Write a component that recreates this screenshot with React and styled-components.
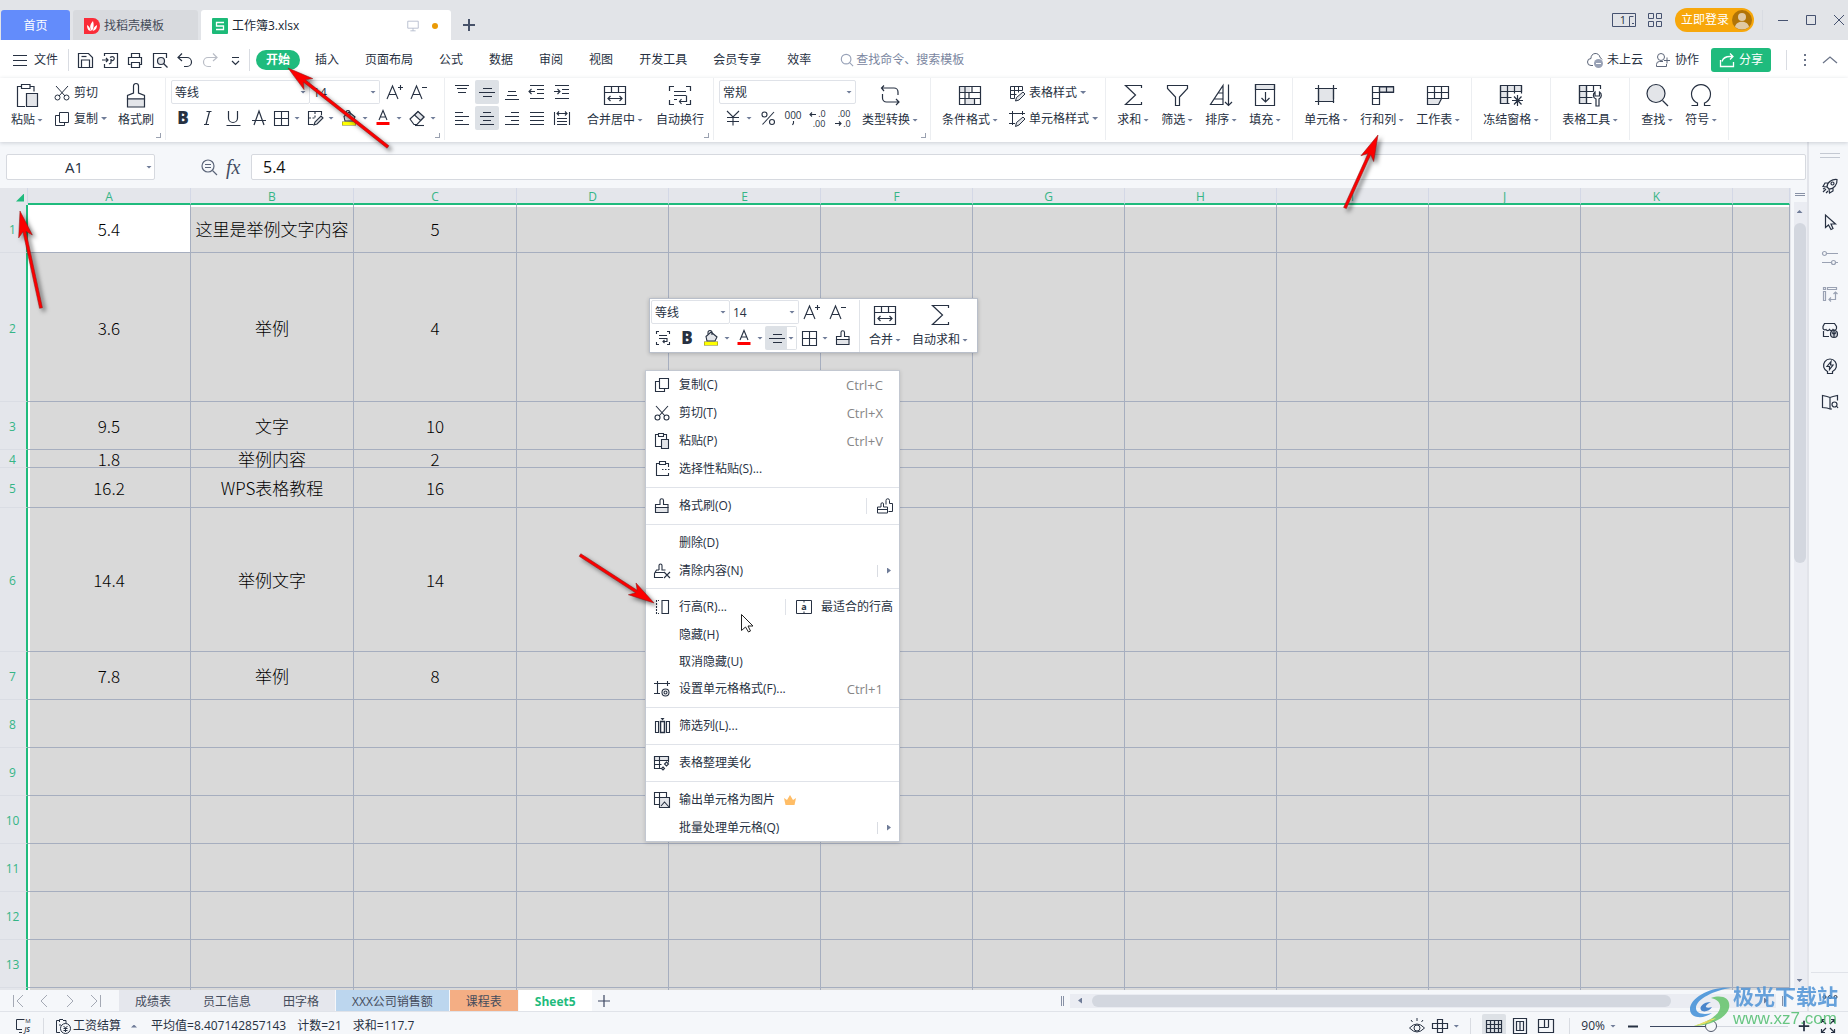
import React from "react";
import styled, { createGlobalStyle, css } from "styled-components";

const ink = "#273142";
const soft = "#e3e5e9";
const green = "#1fbb7d";
const line = "#a6aebf";
const ui = `"Open Sans", "Noto Sans CJK SC", sans-serif`;

const Global = createGlobalStyle`
  * { box-sizing: border-box; }
  body { margin: 0; font: 12px/16px ${ui}; color: ${ink}; background: #f5f7fa; }
  button, input, select { font: inherit; color: inherit; border: 0; padding: 0; margin: 0; background: none; outline: 0; }
  button { display: flex; align-items: center; white-space: nowrap; }
  svg { display: block; flex: none; overflow: visible; }
`;

/* ---------- icons ---------- */

const T = ({ x, y, s = 16, w = 300, children, ...p }) => (
  <text x={x} y={y} fontSize={s} fontWeight={w} fill={ink} stroke="none" textAnchor="middle" {...p}>{children}</text>
);

const brushShape = (
  <>
    <path d="M6 6.5V2.5a1.5 1.5 0 0 1 3.5 0v4h4.5v3H1.5v-3z" />
    <path d="M1.5 9.5H14v5H1.5z" fill={soft} />
  </>
);

const icons = {
  menu: <path d="M1 3.5h14M1 8.5h14M1 13.5h14" />,
  save: <><path d="M1.5 1.5h10l4 4v10h-14zM4.5 15v-7h8v7" /><path d="M4.5 4.5h5" /></>,
  exportPdf: <><path d="M2.5 4V1.5h13v14h-13V12M0 8h6M4 6l2 2-2 2" /><path d="M8 5.500c3-2 5 0 4 2s-3 1-3 0M9 7v4l-2 1" /></>,
  print: <><path d="M4.500 5V1.500h8V5M3.500 12.500h-2v-7h13v7h-2" /><path d="M4.500 10.500h8v5h-8z" /></>,
  preview: <><path d="M14.500 6V1.500h-13v14h8" /><circle cx="9" cy="9" r="3.500" fill={soft} /><path d="M11.500 11.500l4 4" /></>,
  undo: <path d="M5 1.500l-4 4 4 3.500M1.500 5.500H10a4.500 4.500 0 0 1 0 9H7" />,
  redo: <path d="M11 1.500l4 4-4 3.500M14.500 5.500H6a4.500 4.500 0 0 0 0 9h3" />,
  more: <path d="M5 5.500h7M5 9l3.500 3.500L12 9" />,
  search: <><circle cx="7" cy="7" r="5.500" /><path d="M11 11l4 4" /></>,
  cloud: <><path d="M6 13.500H4a3.500 3.500 0 0 1 0-7 4.500 4.500 0 0 1 9-1c1 .5 1.500 1 2 2" /><circle cx="11.500" cy="11.500" r="4.500" fill="#98a1b5" stroke="none" /><path d="M9 11.500h5" stroke="#fff" /></>,
  userPlus: <><circle cx="6" cy="5" r="3.500" /><path d="M1.500 14.500v-2a3 3 0 0 1 3-3H8M1.500 14.500h10V12M9 8.500h6M12 5.500v6" /></>,
  share: <path d="M1.500 8v6.500h13V10M3 9.500C4 6 7 4.500 11 4.500h3M11 1.500l3 3-3 3" />,
  dots: <path d="M8 2v2M8 7v2M8 12v2" strokeWidth="2" />,
  up: <path d="M1 11l7-6 7 6" />,
  cut: <><path d="M2 1l9 10M14 1L5 11" /><circle cx="3.500" cy="12.500" r="2.500" /><circle cx="12.500" cy="12.500" r="2.500" /></>,
  copy: <path d="M5.500 1.500h9v10h-9zM5.500 4.500h-4v10h9v-3" />,
  pasteS: <><path d="M4 1.500H1.500v12H7M10 1.500h2.500V6M4.500 .5h5v3h-5z" /><path d="M7.500 6.500h7v9h-7z" fill={soft} /></>,
  pasteSp: <><path d="M5 2.500H2.500v12H14.500V12M12 2.500h2.500V6M5.500 .5h6v3h-6z" /><path d="M8 8.500h1.500M11 8.500h1.500M14 8.500h1.500" /></>,
  brush: brushShape,
  brush2: <><path d="M9 6.500V2.500a1.500 1.500 0 0 1 3.500 0v3h3v8h-4" /><path d="M4 9V6a1 1 0 0 1 2.500 0v3h4v6h-10V9z" fill="#fff" /><path d="M.5 11.500h10" /></>,
  clear: <><path d="M5 7V2.500a1.500 1.500 0 0 1 3 0V7h3.500M5 7H2.500l-2 3.500v4H9M.5 9.500H10" /><path d="M10 9l6 6M16 9l-6 6" /></>,
  bold: <T x="8" y="14" s="17" w="800">B</T>,
  italic: <path d="M6.500 1.500h5M4 14.500h5M9.500 1.500L6 14.500" />,
  underline: <path d="M3.500 1v7a4.500 4.500 0 0 0 9 0V1M1.500 15.500h14" />,
  strike: <path d="M3 15L8 1l5 14M1 10.500h14" />,
  borders: <path d="M1.500 1.500h14v14h-14zM8.500 1.500v14M1.500 8.500h14" />,
  tableDraw: <><path d="M14.500 5V1.500h-13v13h5" /><path d="M8 2v6M2 8h7" strokeDasharray="2 1.500" /><path d="M14 6l2 2-6 6-3 1 1-3z" fill={soft} /></>,
  fill: <><path d="M3 6.500L8 2l6 5-2 4H4z" fill={soft} /><path d="M5 4V2.500a2 2 0 0 1 4 0V5" /><path d="M1 13.500h14" stroke="#7d7d1c" strokeWidth="4" /><path d="M1.500 13.500h13" stroke="#ff0" strokeWidth="3" /></>,
  color: <><path d="M4 10L8 .5 12 10M5.500 7h5" /><path d="M1.500 13.500h13" stroke="#f00" strokeWidth="3" /></>,
  eraser: <><path d="M1 9l8-7.500 6 5.500-7 7.500H5z" /><path d="M5.500 5l6 5.500L15 7 9 1.500z" fill={soft} /><path d="M6 15.500h9" /></>,
  bigger: <path d="M1 15L6.500 2 12 15M3 10.500h7M12 3.500h5M14.500 1v5" />,
  smaller: <path d="M1 15L6.500 2 12 15M3 10.500h7M12 3.500h5" />,
  alignT: <path d="M1 1.500h14M3 4.500h10M4 8.500h8" />,
  alignM: <path d="M4 4.500h9M0 8.500h16M4 12.500h9" />,
  alignB: <path d="M4 7.500h8M3 11.500h10M1 15.500h14" />,
  outdent: <path d="M1 1.500h14M8 5.500h7M8 9.500h7M1 14.500h14M0 7.500h6M2.500 5L0 7.500 2.500 10" />,
  indent: <path d="M1 1.500h14M8 5.500h7M8 9.500h7M1 14.500h14M0 7.500h6M3.500 5L6 7.500 3.500 10" />,
  alignL: <path d="M1 2.500h8M1 6.500h14M1 10.500h8M1 14.500h14" />,
  alignC: <path d="M4 2.500h8M1 6.500h14M4 10.500h8M1 14.500h14" />,
  alignR: <path d="M7 2.500h8M1 6.500h14M7 10.500h8M1 14.500h14" />,
  justify: <path d="M1 2.500h14M1 6.500h14M1 10.500h14M1 14.500h14" />,
  distribute: <path d="M.5 2v13M15.500 2v13M3 3.500h10M5 1.500l-2 2 2 2M11 1.500l2 2-2 2M3 8.500h10M3 11.500h10M3 14.500h10" />,
  yen: <path d="M2 1l6 6 6-6M8 7v8.500M2 7.500h12M2 11.500h12" />,
  percent: <><circle cx="4.500" cy="4.500" r="2.500" /><circle cx="12" cy="12" r="2.500" /><path d="M14 2L2.500 14.500" /></>,
  thousands: <><T x="8" y="9" s="10" w="400">000</T><path d="M8.500 11v2l-1 2" /></>,
  moreDec: <><T x="12" y="7" s="9" w="400">.0</T><T x="9" y="17" s="9" w="400">.00</T><path d="M0 4.500h6M2 2.500L0 4.500l2 2" /></>,
  lessDec: <><T x="9" y="7" s="9" w="400">.00</T><T x="12" y="17" s="9" w="400">.0</T><path d="M0 13.500h6M4 11.500l2 2-2 2" /></>,
  tableStyle: <><path d="M1.500 1.500h12v4M1.500 1.500v12h4M1.500 5.500h12M1.500 9.500h6M5.500 1.500v12M9.500 1.500v6" /><path d="M14 7l2 2-6 6-3.500 1 1-3.500z" fill={soft} /></>,
  cellStyle: <><path d="M3.500 0v14M0 2.500h16M13.500 0v4M0 12.500h6" /><path d="M14 6l2 2-6 6-3.500 1.500 1-4z" fill={soft} /></>,
  rowHeight: <><path d="M8 1.500h6.500v13H8z" /><path d="M2.500 1v14" strokeDasharray="2 1" /><path d="M2 1.500h3M2 14.500h3" strokeDasharray="1 1" /></>,
  fitRow: <><path d="M.5 1.500h15v13H.5zM8 1.500v2M8 12.500v2" /><T x="8" y="11" s="9" w="700">a</T></>,
  format: <><path d="M3.500 0v13M0 2.500h16M13.500 0v5M0 12.500h6" /><circle cx="11.500" cy="11.500" r="3.500" /><circle cx="11.500" cy="11.500" r="1.500" /></>,
  filterCol: <><path d="M1.500 3.500h3v11h-3zM12.500 3.500h3v11h-3z" /><path d="M6.500 3.500h4v11h-4z" strokeWidth="1.500" /><path d="M6.500 0h4l-2 2.500z" fill={ink} stroke="none" /></>,
  beautify: <><path d="M.5 1.500h14v4H.5z" fill={soft} /><path d="M14.500 1.500v6M.5 1.500v12h7M.5 9.500h7M5.500 1.500v12" /><path d="M12.500 7l2 2-2 2-2-2zM9 12l1.500 1.500L9 15l-1.500-1.500z" /></>,
  toImage: <><path d="M5 12.500H.5v-12h12V5M5.500.5v5M.5 5.500h5" /><path d="M5.500 5.500h10v10h-10zM7 14l3.500-4 4.500 5" fill={soft} /></>,
  wrapS: <path d="M1.500 4V1.500H4M12 1.500h2.500V4M1.500 12v2.500H4M12 14.500h2.500V12M4 5.500h8M4 8.500h8v3H8M9.500 10L8 11.500 9.500 13" />,
  zoomOut: <><circle cx="7" cy="7" r="6" /><path d="M4 5.500h6M4 8.500h6M11.500 11.500L16 16" /></>,
  plus: <path d="M8 2v12M2 8h12" />,
  screen: <path d="M2 2.500h12v8H2zM8 10.500v3M5 13.500h6" />,
  firstN: <path d="M3.500 2v12M13 2L7 8l6 6" />,
  prevN: <path d="M11 2L5 8l6 6" />,
  nextN: <path d="M5 2l6 6-6 6" />,
  lastN: <path d="M3 2l6 6-6 6M12.500 2v12" />,
  js: <><path d="M7 11.500H1.500v-10h8M4 14.500h3" /><T x="13" y="5" s="6" w="400">M</T><T x="12" y="14" s="7" w="600" fontStyle="italic">JS</T></>,
  payroll: <><path d="M5 14.500H1.500v-12h3M8 2.500h3v3M4.500 4V1.500H8M4 7h2" /><circle cx="10.500" cy="10.500" r="5" /><path d="M8.500 8l2 2 2-2M10.500 10v4M8.500 10.500h4M8.500 12.500h4" /></>,
  eye: <><path d="M.5 10q7.500-8 15 0-7.500 8-15 0zM8 0v3M2 2l1.500 2M14 2l-1.500 2" /><circle cx="8" cy="10" r="3" /></>,
  cross: <path d="M5.500 1.500h5v13h-5zM.5 5.500h15v5H.5z" />,
  grid: <path d="M.5 2.500h15v12H.5zM.5 6.500h15M.5 10.500h15M4.500 2.500v12M8.500 2.500v12M12.500 2.500v12" />,
  pageView: <path d="M1.500.5h13v15h-13zM4.500 3.500h7v9h-7zM8 3.500v9" />,
  pageBreak: <path d="M.5 1.500h15v13H.5zM6.500 1.500v8M.5 9.500h10M10.500 1.500v8" />,
  full: <path d="M1.500 5V1.500H5M11 1.500h3.500V5M1.500 11v3.500H5M11 14.500h3.500V11M2 2l4 4M14 2l-4 4M2 14l4-4M14 14l-4-4" />,
  rocket: <><path d="M5 9c0-5 5-8 10-7.500C15.500 6.500 12 11 7 11zM6 5H3L1 8.500l4 .5M11 10v3l-3.500 2L7 11" /><circle cx="10.500" cy="5.500" r="1.500" /><path d="M4 11l-3 3M3 10l-2 1M6 13l-2 2" /></>,
  pointer: <path d="M3.500 1v12.500l3-2.500 2.500 4.500 2-1-2-4.500h4.500z" />,
  sliders: <><circle cx="2.500" cy="3.500" r="2" /><path d="M5 3.500h11M0 12.500h9M14 12.500h2" /><circle cx="11.500" cy="12.500" r="2" /></>,
  layout: <path d="M1.500 1.500h2v2h-2zM5.500 1.500h9v2h-9zM1.500 5.500h2v9h-2zM13.500 6v7.500H7M11.500 8l2-2 2 2M9 11.500l-2 2 2 2" />,
  store: <><path d="M2.500 1.500h10l2 3v2a2 2 0 0 1-3.500 1 2 2 0 0 1-3.500 0 2 2 0 0 1-3.500 0 2 2 0 0 1-3-1v-2zM1.500 9v5.500H7" /><circle cx="12" cy="12" r="3.500" fill="#cfd3da" /><path d="M12 9v6M10 10.500l2 2 2-2" /></>,
  bulb: <><path d="M5.500 15.500v-2a6.500 6.500 0 1 1 5 0v2z" /><path d="M9 3.500L5 8.500h2.500V11.500L11 7H8.500z" /></>,
  book: <path d="M8 3.500L5 2.500.5 1.500v12l4.500.5 3 1zM8 3.500l3-1 4.500-1v5M8 15h2M12.500 8a2.500 2.500 0 1 0 0 5 2.500 2.500 0 0 0 0-5M14.500 12l1.500 2" />,
  dots3: <><circle cx="2.500" cy="8" r="1.500" /><circle cx="8" cy="8" r="1.500" /><circle cx="13.500" cy="8" r="1.500" /></>,
  dual: <><path d="M-4.500 1.500h23v13h-23zM16.500 4.500h-4v10M17 11.500h-2" /><T x="6" y="12" s="11" w="400">1</T></>,
  apps: <path d="M1.500 1.500h5v5h-5zM9.500 1.500h5v5h-5zM1.500 9.500h5v5h-5zM9.500 9.500h5v5h-5z" />,
  min: <path d="M3 8.500h10" />,
  max: <path d="M3.500 3.500h9v9h-9z" />,
  close: <path d="M3 3l10 10M13 3L3 13" />,
};

const big = {
  paste: <><path d="M6 3.500H2.500v20H10M15 3.500h4v5M6.500 1.500h8.500v4H6.500z" /><path d="M11.500 10.500h11v13h-11z" fill={soft} /></>,
  brush: <><path d="M9.500 10V3a2.500 2.500 0 0 1 5 0v7l6 2.500V16h-17v-3.500z" /><path d="M3.500 16h17v8h-17z" fill={soft} /></>,
  merge: <path d="M1.500 3.500h21v18h-21zM1.500 9.500h21M8.500 3.500v6M15.500 3.500v6M5 15.500h14M7.500 13L5 15.500 7.500 18M16.500 13l2.500 2.500-2.500 2.500" />,
  wrap: <path d="M1.500 8V3.500H6M18 3.500h4.500V8M1.500 17v4.500H6M18 21.500h4.500V17M6 8.500h12M6 12.500h12M6 16.500h3M18.500 12.500v6h-7M13.500 16l-2 2.500 2 2.500" />,
  convert: <path d="M6 2.500L3.500 5 6 8M3.500 5H16a4 4 0 0 1 4 4v3M4.500 11v4a4 4 0 0 0 4 4H21M18 16l3 3-3 3" />,
  cond: <><path d="M2 4h10v6H2zM7 16h9v6H7z" fill={soft} stroke="none" /><path d="M1.500 3.500h21v18h-21zM1.500 9.500h21M1.500 15.500h21M7 3.500v18M14 3.500v6M16.500 15.500v6M11 9.500v6" /></>,
  sum: <path d="M20.500 5V2.500H4.500L14.500 12 4.500 21.500h16V19" />,
  filter: <path d="M2.500 2.500h20v3L14.500 14v8.500h-4V14l-8-8.500z" />,
  sort: <><path d="M1.500 21.500h12.500v-19zM5 16h9M9 10h5" /><path d="M19.500 1.500v21M16 19l3.500 3.500L23 19" /></>,
  fillDown: <><path d="M2.500 1.500h19v5h-19z" fill={soft} /><path d="M2.500 1.500h19v21h-19zM12.500 9v10M8.500 15l4 4 4-4" /></>,
  cells: <><path d="M4.500 5.500h15v13h-15z" fill={soft} /><path d="M4.500 2v20M19.500 2v14M1 5.500h22M1 18.500h17M19.500 18v2" /></>,
  rowcol: <><path d="M2.500 3.500h21v6h-14v12h-7z" /><path d="M9.500 4h14v5h-14z" fill={soft} /><path d="M9.500 3.500v6M16.500 3.500v6M2.500 9.500h7M2.500 15.500h7" /></>,
  sheet: <><path d="M1.500 15.500h14l-3 6h-11z" fill={soft} /><path d="M1.500 3.500h21v12h-21zM1.500 9.500h21M8.500 3.500v12M15.500 3.500v12" /></>,
  freeze: <><path d="M1.500 2.500h21v6h-14v12h-7z" fill={soft} /><path d="M22.500 2.500v8M1.500 2.500v18h9M1.500 8.500h21M1.500 14.500h11M8.500 2.500v18M15.500 2.500v8M18.500 12v11M13 17.500h11M15 13.500l7.500 8M22.500 13.500l-7.500 8" /></>,
  tools: <><path d="M1.500 2.500h7v18h-7z" fill={soft} /><path d="M22.500 6V2.500h-21v18h12M1.500 8.500h14M1.500 14.500h13M8.500 2.500v18M15.500 2.500v6" /><path d="M18 23v-7a4 4 0 0 1-1-7v4h4.500V9a4 4 0 0 1-.5 7v7z" fill="#fff" /></>,
  find: <><circle cx="11" cy="10.500" r="9" fill={soft} /><path d="M17.500 17.500L23 23" /></>,
  omega: <path d="M2.500 22.500h6V20a9.500 9.500 0 1 1 7 0v2.500h6" />,
};

const Svg = styled.svg`
  fill: none;
  stroke: ${(p) => p.$c || ink};
  stroke-width: ${(p) => p.$w || 1};
  font-family: "Open Sans", sans-serif;
`;
const Icon = ({ n, c, size = 16, w }) => (
  <Svg width={size} height={size} viewBox="0 0 16 16" $c={c} $w={w} aria-hidden="true">{icons[n]}</Svg>
);
const BigIcon = ({ n }) => (
  <Svg width="24" height="24" viewBox="0 0 24 24" $w="1.2" aria-hidden="true">{big[n]}</Svg>
);

const Caret = styled.i`
  width: 6px;
  height: 3px;
  flex: none;
  margin-left: -1px;
  background: #6f7c98;
  clip-path: polygon(${(p) => (p.$dir === "up" ? "0 100%, 100% 100%, 50% 0" : "0 0, 100% 0, 50% 100%")});
`;

/* ---------- title bar ---------- */

const Shell = styled.div`
  position: relative;
  display: flex;
  flex-direction: column;
  height: 100vh;
  overflow: hidden;
`;
const TitleBar = styled.header`
  display: flex;
  flex: none;
  align-items: flex-end;
  gap: 3px;
  height: 40px;
  padding-left: 1px;
  background: #e2e4e8;
`;
const DocTab = styled.button`
  flex: 0 0 ${(p) => p.$w}px;
  height: 30px;
  gap: 4px;
  padding: 2px ${(p) => (p.$home ? 0 : 11)}px 0;
  justify-content: ${(p) => (p.$home ? "center" : "flex-start")};
  border-radius: 3px 3px 0 0;
  background: ${(p) => p.$bg};
  color: ${(p) => p.$fg};
`;
const Spacer = styled.span`
  flex: 1;
`;
const Dot = styled.i`
  width: 6px;
  height: 6px;
  margin: 0 2px 0 8px;
  border-radius: 50%;
  background: #ea9a06;
`;
const IconButton = styled.button`
  flex: none;
  justify-content: center;
  width: ${(p) => p.$w || 16}px;
  height: ${(p) => p.$h || 24}px;
  border-radius: 2px;
  background: ${(p) => (p.$on ? "#dde1e6" : "none")};
`;
const WindowTools = styled.div`
  display: flex;
  align-items: center;
  gap: 12px;
  height: 40px;
  padding-right: 1px;
`;
const Login = styled.button`
  height: 24px;
  gap: 3px;
  margin-right: -4px;
  padding: 0 2px 0 6px;
  border-radius: 12px;
  background: #f7a70b;
  color: #fff;
`;
const Rule = styled.i`
  flex: none;
  width: 1px;
  height: ${(p) => p.$h || 22}px;
  background: #d9dce2;
`;

const TitleArea = () => (
  <TitleBar>
    <DocTab $w={69} $home $bg="#638cfb" $fg="#fff">首页</DocTab>
    <DocTab $w={125} $bg="#d8dade" $fg="#454c59">
      <svg width="16" height="16" viewBox="0 0 16 16">
        <path d="M0 0h9a7 8 0 0 1 0 16H0z" fill="#fa2c38" />
        <path d="M8 13C5 10 6 6 9 3c1 3 1 7-1 10zM7 13c-3 0-4-3-4-6 2 1 3 3 4 6zM9 13c3-1 4-3 4-6-2 1-4 3-4 6z" fill="#fff" />
      </svg>
      找稻壳模板
    </DocTab>
    <DocTab $w={250} $bg="#fff" $fg="#202733">
      <svg width="16" height="16" viewBox="0 0 16 16">
        <rect width="16" height="16" rx="1" fill="#1cba78" />
        <path d="M12 4.500H4.500V8h7v3.500H4" fill="none" stroke="#fff" strokeWidth="1.300" />
      </svg>
      工作簿3.xlsx
      <Spacer />
      <Icon n="screen" c="#b3bacb" size={14} />
      <Dot />
    </DocTab>
    <IconButton $w={30} $h={30} aria-label="新建"><Icon n="plus" w={2} c="#475269" /></IconButton>
    <Spacer />
    <WindowTools>
      <IconButton $w={20} aria-label="窗口"><Icon n="dual" c="#465270" /></IconButton>
      <IconButton aria-label="应用"><Icon n="apps" c="#465270" /></IconButton>
      <Login>
        立即登录
        <svg width="20" height="20" viewBox="0 0 20 20">
          <circle cx="10" cy="10" r="10" fill="#b17407" />
          <circle cx="10" cy="7" r="4" fill="#e0c9a4" />
          <path d="M3 17c1-7 13-7 14 0q-7 5-14 0z" fill="#e0c9a4" />
        </svg>
      </Login>
      <Rule $h={20} />
      <IconButton aria-label="最小化"><Icon n="min" c="#465270" /></IconButton>
      <IconButton aria-label="最大化"><Icon n="max" c="#465270" /></IconButton>
      <IconButton aria-label="关闭"><Icon n="close" c="#465270" /></IconButton>
    </WindowTools>
  </TitleBar>
);

/* ---------- menu row ---------- */

const MenuBar = styled.nav`
  display: flex;
  flex: none;
  align-items: center;
  height: 38px;
  padding: 1px 11px 0 12px;
  background: #fff;
`;
const FileButton = styled.button`
  gap: 6px;
  margin-right: 10px;
`;
const QuickTools = styled.div`
  display: flex;
  gap: 9px;
  padding: 0 6px 0 8px;
`;
const MenuTabs = styled.div`
  display: flex;
  align-items: center;
  padding-left: 6px;
`;
const MenuTab = styled.button`
  height: 20px;
  padding: 1px 13px 0;
  ${(p) =>
    p.$active &&
    css`
      padding: 0 10px;
      margin-right: 2px;
      border-radius: 10px;
      background: ${green};
      color: #fff;
      font-weight: 700;
    `}
`;
const Search = styled.label`
  display: flex;
  align-items: center;
  gap: 2px;
  margin-left: 16px;
  input { width: 120px; color: #7a86a0; }
  input::placeholder { color: #7a86a0; opacity: 1; }
`;
const MenuRight = styled.div`
  display: flex;
  align-items: center;
  gap: 12px;
`;
const TextButton = styled.button`
  gap: 4px;
`;
const ShareButton = styled.button`
  height: 24px;
  gap: 4px;
  margin-right: 3px;
  padding: 0 8px;
  border-radius: 3px;
  background: ${green};
  color: #fff;
`;

const quick = ["save", "exportPdf", "print", "preview", "undo", "redo", "more"];
const menuTabs = ["开始", "插入", "页面布局", "公式", "数据", "审阅", "视图", "开发工具", "会员专享", "效率"];

const Menu = () => (
  <MenuBar>
    <FileButton><Icon n="menu" />文件</FileButton>
    <Rule />
    <QuickTools>
      {quick.map((n) => (
        <IconButton key={n} aria-label={n}><Icon n={n} c={n === "redo" ? "#b9bdc6" : undefined} w="1.2" /></IconButton>
      ))}
    </QuickTools>
    <Rule />
    <MenuTabs>
      {menuTabs.map((t, i) => <MenuTab key={t} $active={i === 0}>{t}</MenuTab>)}
    </MenuTabs>
    <Search>
      <Icon n="search" c="#98a2b8" size={14} w="1.3" />
      <input type="search" aria-label="查找" placeholder="查找命令、搜索模板" />
    </Search>
    <Spacer />
    <MenuRight>
      <TextButton><Icon n="cloud" c="#5d6679" />未上云</TextButton>
      <TextButton><Icon n="userPlus" c="#5d6679" />协作</TextButton>
      <ShareButton><Icon n="share" c="#fff" w="1.3" />分享</ShareButton>
      <Rule $h={20} />
      <IconButton $w={12} aria-label="更多"><Icon n="dots" c="#6c7589" /></IconButton>
      <IconButton $w={14} aria-label="折叠"><Icon n="up" c="#6c7589" w="1.3" /></IconButton>
    </MenuRight>
  </MenuBar>
);

/* ---------- ribbon ---------- */

const RibbonBar = styled.section`
  position: relative;
  z-index: 1;
  display: flex;
  flex: none;
  height: 64px;
  background: #fff;
  box-shadow: 0 1px 4px rgba(40, 50, 70, 0.2);
`;
const Group = styled.div`
  position: relative;
  display: flex;
  flex: none;
  align-items: flex-start;
  gap: ${(p) => p.$gap || 12}px;
  height: 62px;
  padding: 2px ${(p) => p.$r || 11}px 0 ${(p) => p.$l || 11}px;
  border-right: 1px solid #eceef1;
`;
const Corner = styled.i`
  position: absolute;
  right: 4px;
  bottom: 2px;
  width: 5px;
  height: 5px;
  border: solid #9aa1b0;
  border-width: 0 1px 1px 0;
`;
const Stack = styled.div`
  display: flex;
  flex-direction: column;
  gap: 2px;
`;
const Line = styled.div`
  display: flex;
  align-items: center;
  height: 24px;
  gap: ${(p) => p.$gap ?? 0}px;
  padding-left: ${(p) => p.$pl || 0}px;
`;
const BigButton = styled.button`
  flex-direction: column;
  flex: none;
`;
const BigPic = styled.span`
  display: flex;
  align-items: center;
  height: 28px;
  padding-top: 2px;
`;
const Label = styled.span`
  display: flex;
  align-items: center;
  gap: 3px;
  height: 24px;
`;
const SmallButton = styled.button`
  height: 24px;
  gap: 4px;
  padding-top: 1px;
`;
const Combo = styled.span`
  position: relative;
  flex: none;
  display: flex;
  align-items: center;
  width: ${(p) => p.$w}px;
  height: 24px;
  border: 1px solid #dfe2e8;
  border-radius: 2px;
  & + & { border-left: 0; border-radius: 0 2px 2px 0; }
  select { appearance: none; width: 100%; height: 22px; padding: 1px 0 0 3px; }
  i { position: absolute; right: 3px; pointer-events: none; }
`;
const ComboBox = ({ w, v, label }) => (
  <Combo $w={w}>
    <select aria-label={label} defaultValue={v}><option>{v}</option></select>
    <Caret />
  </Combo>
);
const Big = ({ n, t, drop = true }) => (
  <BigButton>
    <BigPic><BigIcon n={n} /></BigPic>
    <Label>{t}{drop && <Caret />}</Label>
  </BigButton>
);
const DropButton = styled.button`
  flex: none;
  gap: 6px;
  width: ${(p) => p.$w}px;
  height: 24px;
`;
const Drop = ({ n, w = 34 }) => (
  <DropButton $w={w} aria-label={n}><Icon n={n} w="1.1" /><Caret /></DropButton>
);

const Ribbon = () => (
  <RibbonBar>
    <Group $gap={11}>
      <Big n="paste" t="粘贴" />
      <Stack>
        <SmallButton><Icon n="cut" />剪切</SmallButton>
        <SmallButton><Icon n="copy" />复制<Caret /></SmallButton>
      </Stack>
      <Big n="brush" t="格式刷" drop={false} />
      <Corner />
    </Group>
    <Group $l={5} $r={8}>
      <Stack>
        <Line>
          <ComboBox w={139} v="等线" label="字体" />
          <ComboBox w={70} v="14" label="字号" />
          <IconButton $w={28} aria-label="增大字号"><Icon n="bigger" w="1.1" /></IconButton>
          <IconButton $w={20} aria-label="减小字号"><Icon n="smaller" w="1.1" /></IconButton>
        </Line>
        <Line>
          <IconButton $w={24} aria-label="加粗"><Icon n="bold" /></IconButton>
          <IconButton $w={26} aria-label="倾斜"><Icon n="italic" w="1.2" /></IconButton>
          <IconButton $w={24} aria-label="下划线"><Icon n="underline" w="1.2" /></IconButton>
          <IconButton $w={28} aria-label="删除线"><Icon n="strike" w="1.2" /></IconButton>
          <Drop n="borders" /><Drop n="tableDraw" /><Drop n="fill" /><Drop n="color" /><Drop n="eraser" w={27} />
        </Line>
      </Stack>
      <Corner />
    </Group>
    <Group $l={5} $r={9} $gap={13}>
      <Stack>
        <Line $gap={1}>
          {["alignT", "alignM", "alignB", "outdent", "indent"].map((n) => (
            <IconButton key={n} $w={24} $on={n === "alignM"} aria-label={n}><Icon n={n} w="1.1" /></IconButton>
          ))}
        </Line>
        <Line $gap={1}>
          {["alignL", "alignC", "alignR", "justify", "distribute"].map((n) => (
            <IconButton key={n} $w={24} $on={n === "alignC"} aria-label={n}><Icon n={n} w="1.1" /></IconButton>
          ))}
        </Line>
      </Stack>
      <Big n="merge" t="合并居中" />
      <Big n="wrap" t="自动换行" drop={false} />
      <Corner />
    </Group>
    <Group $l={5} $r={12} $gap={6}>
      <Stack>
        <ComboBox w={137} v="常规" label="数字格式" />
        <Line $pl={6} $gap={9}>
          <Drop n="yen" w={26} />
          <IconButton aria-label="百分比"><Icon n="percent" w="1.1" /></IconButton>
          <IconButton aria-label="千位分隔"><Icon n="thousands" w="1.1" /></IconButton>
          <IconButton aria-label="增加小数"><Icon n="moreDec" w="1.1" /></IconButton>
          <IconButton aria-label="减少小数"><Icon n="lessDec" w="1.1" /></IconButton>
        </Line>
      </Stack>
      <Big n="convert" t="类型转换" />
      <Corner />
    </Group>
    <Group $gap={11} $r={7}>
      <Big n="cond" t="条件格式" />
      <Stack>
        <SmallButton><Icon n="tableStyle" />表格样式<Caret /></SmallButton>
        <SmallButton><Icon n="cellStyle" />单元格样式<Caret /></SmallButton>
      </Stack>
    </Group>
    <Group>
      <Big n="sum" t="求和" /><Big n="filter" t="筛选" /><Big n="sort" t="排序" /><Big n="fillDown" t="填充" />
    </Group>
    <Group>
      <Big n="cells" t="单元格" /><Big n="rowcol" t="行和列" /><Big n="sheet" t="工作表" />
    </Group>
    <Group><Big n="freeze" t="冻结窗格" /></Group>
    <Group><Big n="tools" t="表格工具" /></Group>
    <Group><Big n="find" t="查找" /><Big n="omega" t="符号" /></Group>
  </RibbonBar>
);

/* ---------- formula bar ---------- */

const FormulaBar = styled.div`
  display: flex;
  flex: none;
  align-items: center;
  gap: 9px;
  height: 46px;
  padding: 4px 1px 0 6px;
`;
const NameBox = styled.label`
  display: flex;
  align-items: center;
  width: 149px;
  height: 26px;
  margin-right: 37px;
  padding-right: 2px;
  border: 1px solid #d6d9df;
  border-radius: 2px;
  background: #fff;
  input { flex: 1; min-width: 0; padding-right: 6px; text-align: center; font-size: 15px; }
`;
const FormulaInput = styled.input`
  flex: 1;
  height: 26px;
  padding: 0 11px;
  border: 1px solid #d6d9df;
  border-radius: 2px;
  background: #fff;
  font-size: 16px;
  color: #111;
`;
const Fx = styled.button`
  width: 16px;
  font: italic 20px/24px "Liberation Serif", serif;
  color: #434d63;
`;

/* ---------- sheet ---------- */

const Body = styled.main`
  display: flex;
  flex: 1;
  min-height: 0;
`;
const Work = styled.div`
  display: flex;
  flex: 1;
  flex-direction: column;
  min-width: 0;
`;
const SheetRow = styled.div`
  display: flex;
  flex: 1;
  min-height: 0;
`;
const Canvas = styled.div`
  flex: 1;
  min-width: 0;
  overflow: hidden;
  background: #d9d9d9;
`;
const Table = styled.table`
  width: 100%;
  table-layout: fixed;
  border-collapse: separate;
  border-spacing: 0;
`;
const ColHead = styled.th`
  height: 17px;
  padding: 2px 0 0;
  border-right: 1px solid #d3d8e6;
  border-bottom: 2px solid ${green};
  background: #e4e6eb;
  font-weight: 400;
  line-height: 13px;
  color: #35b586;
`;
const AllHead = styled(ColHead)`
  border-bottom-color: #e4e6eb;
  i {
    display: block;
    width: 8px;
    height: 8px;
    margin: 2px 0 0 16px;
    background: ${green};
    clip-path: polygon(100% 0, 100% 100%, 0 100%);
  }
`;
const RowHead = styled.th`
  padding: 3px 1px 0 0;
  border-right: 2px solid ${green};
  border-bottom: 1px solid #dadde4;
  background: #e4e6eb;
  font-weight: 400;
  line-height: 14px;
  color: #35b586;
`;
const Cell = styled.td`
  padding: 0;
  border-right: 1px solid ${line};
  border-bottom: 1px solid ${line};
  background: ${(p) => (p.$active ? "#fff" : "#d9d9d9")};
  box-shadow: inset ${(p) => (p.$left ? 2 : 0)}px ${(p) => (p.$top ? 2 : 0)}px #fff;
  text-align: center;
  white-space: nowrap;
  font: 300 17px/17px "Noto Sans CJK SC", sans-serif;
  color: #000;
`;
const Row = styled.tr`
  height: ${(p) => p.$h}px;
`;

const colWidths = [28, 163, 163, 163, 152, 152, 152, 152, 152, 152, 152, 152];
const cols = ["A", "B", "C", "D", "E", "F", "G", "H", "I", "J", "K", ""];
const rows = [
  [48, "5.4", "这里是举例文字内容", "5"],
  [149, "3.6", "举例", "4"],
  [48, "9.5", "文字", "10"],
  [18, "1.8", "举例内容", "2"],
  [40, "16.2", "WPS表格教程", "16"],
  [144, "14.4", "举例文字", "14"],
  [48, "7.8", "举例", "8"],
  [48], [48], [48], [48], [48], [48], [48],
];

const Sheet = () => (
  <Canvas>
    <Table>
      <colgroup>
        {colWidths.map((w, i) => <col key={i} width={w} />)}
        <col />
      </colgroup>
      <thead>
        <tr>
          <AllHead><i /></AllHead>
          {cols.map((c, i) => <ColHead key={i} scope="col">{c}</ColHead>)}
        </tr>
      </thead>
      <tbody>
        {rows.map(([h, ...vals], r) => (
          <Row key={r} $h={h}>
            <RowHead scope="row">{r + 1}</RowHead>
            {cols.map((c, i) => (
              <Cell key={i} $left={i === 0} $top={r === 0} $active={r === 0 && i === 0}>{vals[i]}</Cell>
            ))}
          </Row>
        ))}
      </tbody>
    </Table>
  </Canvas>
);

const VScroll = styled.div`
  display: flex;
  flex: none;
  flex-direction: column;
  align-items: center;
  width: 17px;
  padding-left: 2px;
  border-left: 1px solid #e4e6eb;
`;
const SplitGrip = styled.i`
  width: 10px;
  height: 3px;
  margin: 5px 0 6px;
  border: solid #8891a5;
  border-width: 1px 0;
`;
const Track = styled.div`
  display: flex;
  flex: 1;
  flex-direction: column;
  align-items: center;
  justify-content: space-between;
  width: 13px;
  padding: 8px 0;
  background: #eaecf2;
`;
const VThumb = styled.i`
  flex: 0 0 44%;
  width: 12px;
  margin: 10px 0 auto;
  border-radius: 6px;
  background: #d3d7df;
`;

/* ---------- sheet tabs ---------- */

const TabBar = styled.div`
  display: flex;
  flex: none;
  align-items: stretch;
  height: 22px;
  border-bottom: 1px solid #e0e3e9;
`;
const TabNav = styled.div`
  display: flex;
  align-items: center;
  gap: 10px;
  width: 119px;
  padding-left: 10px;
`;
const SheetTab = styled.button`
  height: 21px;
  padding: 2px 16px 0;
  background: ${(p) => p.$bg || "#e5e7ed"};
  color: #454c5c;
  ${(p) => p.$bg && css`border-left: 1px solid #f5f7fa;`}
  ${(p) => p.$active && css`color: ${green}; font-weight: 700;`}
`;
const HScroll = styled.div`
  display: flex;
  flex: 0 1 746px;
  align-items: center;
  gap: 6px;
  margin-left: auto;
`;
const Grip = styled.i`
  width: 3px;
  height: 10px;
  border: solid #8891a5;
  border-width: 0 1px;
`;
const HTrack = styled.div`
  display: flex;
  flex: 1;
  align-items: center;
  height: 14px;
  background: #eaecf2;
`;
const HThumb = styled.i`
  width: 82%;
  height: 12px;
  margin-left: 2px;
  border-radius: 6px;
  background: #d3d7df;
`;
const SideArrow = styled.i`
  width: 4px;
  height: 6px;
  margin: 0 ${(p) => p.$m ?? 8}px;
  background: #6f7c98;
  clip-path: polygon(${(p) => (p.$right ? "0 0, 100% 50%, 0 100%" : "100% 0, 0 50%, 100% 100%")});
`;

const sheetTabs = [
  ["成绩表"], ["员工信息"], ["田字格"],
  ["XXX公司销售额", "#bcd6ee"], ["课程表", "#f4ae84"], ["Sheet5", "#fff"],
];

/* ---------- side panel ---------- */

const Side = styled.aside`
  display: flex;
  flex: none;
  flex-direction: column;
  align-items: center;
  gap: 12px;
  width: 41px;
  padding: 11px 0 6px 2px;
  border-left: 2px solid #e2e4ea;
  border-bottom: 1px solid #e0e3e9;
`;
const Handle = styled.i`
  width: 20px;
  height: 5px;
  margin-bottom: 4px;
  border: solid #c4c9d2;
  border-width: 1px 0;
`;
const SideFoot = styled.div`
  display: flex;
  justify-content: center;
  width: 100%;
  margin-top: auto;
  padding-top: 16px;
  border-top: 1px solid #e0e3e9;
`;

/* ---------- status bar ---------- */

const Status = styled.footer`
  flex: none;
  height: 22px;
  overflow: hidden;
`;
const StatusInner = styled.div`
  display: flex;
  align-items: center;
  gap: 11px;
  height: 28px;
  padding: 0 12px 0 14px;
`;
const Views = styled.div`
  display: flex;
  gap: 2px;
`;
const Tools = styled.div`
  display: flex;
  gap: 7px;
`;
const Stats = styled.div`
  display: flex;
  gap: 11px;
  padding-left: 3px;
  white-space: nowrap;
`;
const Tight = styled.button`
  gap: ${(p) => p.$gap || 6}px;
`;
const Zoom = styled.input`
  appearance: none;
  width: 138px;
  height: 14px;
  background: linear-gradient(90deg, #3c4861 44%, #d3d7df 44%) center / 100% 1px no-repeat;
  &::-webkit-slider-thumb {
    appearance: none;
    width: 12px;
    height: 12px;
    border: 1px solid #50586a;
    border-radius: 50%;
    background: #f7f8fa;
  }
`;

/* ---------- floating panels ---------- */

const MiniBar = styled.div`
  position: absolute;
  left: 649px;
  top: 298px;
  z-index: 3;
  display: flex;
  padding: 1px 9px 0 1px;
  height: 55px;
  border: 1px solid #b9bfca;
  background: #fff;
  box-shadow: 0 1px 4px rgba(0, 0, 0, 0.2);
`;
const MiniLeft = styled(Stack)`
  width: 209px;
  border-right: 1px solid #e0e3e8;
`;
const MiniBig = styled.div`
  display: flex;
  gap: 11px;
  padding-left: 9px;
`;
const AlignSplit = styled.button`
  width: 32px;
  height: 24px;
  margin-right: 4px;
  padding: 1px 1px 1px 4px;
  border-radius: 2px;
  background: #dde1e6;
  span { display: flex; align-items: center; justify-content: center; width: 9px; height: 22px; margin-left: auto; background: #fff; }
`;

const Context = styled.ul`
  position: absolute;
  left: 645px;
  top: 370px;
  z-index: 3;
  width: 255px;
  margin: 0;
  padding: 0;
  list-style: none;
  border: 1px solid #c3c8d1;
  background: #fff;
  box-shadow: 0 1px 4px rgba(0, 0, 0, 0.15);
`;
const Item = styled.li`
  display: flex;
  align-items: center;
  height: ${(p) => (p.$short ? 27 : 28)}px;
  padding-right: 6px;
  ${(p) =>
    p.$rule &&
    css`
      margin-top: 9px;
      position: relative;
      &::before { content: ""; position: absolute; left: 0; right: 0; top: -5px; height: 1px; background: #e0e3e9; }
    `}
`;
const ItemButton = styled.button`
  flex: 1;
  gap: 9px;
  height: 100%;
  padding: 0 0 0 8px;
`;
const Blank = styled.i`
  width: 16px;
`;
const Key = styled.kbd`
  margin: 0 10px 0 auto;
  font: inherit;
  font-size: 13px;
  color: #868686;
`;
const SplitPart = styled.button`
  gap: 9px;
  height: 16px;
  padding-left: 10px;
  border-left: 1px solid #dfe2e8;
`;
const SubMark = styled.span`
  display: flex;
  align-items: center;
  gap: 9px;
  padding-right: 2px;
`;

const contextItems = [
  { i: "copy", t: "复制(C)", k: "Ctrl+C" },
  { i: "cut", t: "剪切(T)", k: "Ctrl+X" },
  { i: "pasteS", t: "粘贴(P)", k: "Ctrl+V" },
  { i: "pasteSp", t: "选择性粘贴(S)..." },
  { i: "brush", t: "格式刷(O)", rule: true, split: "brush2" },
  { t: "删除(D)", rule: true },
  { i: "clear", t: "清除内容(N)", short: true, sub: true },
  { i: "rowHeight", t: "行高(R)...", rule: true, split: "fitRow", st: "最适合的行高" },
  { t: "隐藏(H)", short: true },
  { t: "取消隐藏(U)", short: true },
  { i: "format", t: "设置单元格格式(F)...", k: "Ctrl+1" },
  { i: "filterCol", t: "筛选列(L)...", rule: true },
  { i: "beautify", t: "表格整理美化", rule: true },
  { i: "toImage", t: "输出单元格为图片", rule: true, crown: true },
  { t: "批量处理单元格(Q)", short: true, sub: true },
];

const ContextMenu = () => (
  <Context>
    {contextItems.map((m) => (
      <Item key={m.t} $rule={m.rule} $short={m.short}>
        <ItemButton>
          {m.i ? <Icon n={m.i} w="1.1" /> : <Blank />}
          {m.t}
          {m.crown && (
            <svg width="12" height="10" viewBox="0 0 12 10"><path d="M0 3l3 2 3-5 3 5 3-2-1.500 7h-9z" fill="#ffbd66" /></svg>
          )}
          {m.k && <Key>{m.k}</Key>}
        </ItemButton>
        {m.split && <SplitPart aria-label={m.st || "连续格式刷"}><Icon n={m.split} />{m.st}</SplitPart>}
        {m.sub && <SubMark><Rule $h={12} /><SideArrow $right $m={0} /></SubMark>}
      </Item>
    ))}
  </Context>
);

const MiniToolbar = () => (
  <MiniBar>
    <MiniLeft>
      <Line>
        <ComboBox w={79} v="等线" label="浮动字体" />
        <ComboBox w={69} v="14" label="浮动字号" />
        <IconButton $w={24} aria-label="增大"><Icon n="bigger" w="1.1" /></IconButton>
        <IconButton $w={28} aria-label="减小"><Icon n="smaller" w="1.1" /></IconButton>
      </Line>
      <Line $pl={4}>
        <IconButton aria-label="换行"><Icon n="wrapS" w="1.1" /></IconButton>
        <IconButton $w={32} aria-label="粗体"><Icon n="bold" /></IconButton>
        <Drop n="fill" w={33} />
        <Drop n="color" w={29} />
        <AlignSplit aria-label="对齐"><Icon n="alignM" w="1.1" /><span><Caret /></span></AlignSplit>
        <Drop n="borders" w={34} />
        <IconButton aria-label="格式刷"><Icon n="brush" w="1.1" /></IconButton>
      </Line>
    </MiniLeft>
    <MiniBig><Big n="merge" t="合并" /><Big n="sum" t="自动求和" /></MiniBig>
  </MiniBar>
);

const Overlay = styled.svg`
  position: absolute;
  inset: 0;
  z-index: 4;
  width: 100%;
  height: 100%;
  pointer-events: none;
  filter: drop-shadow(3px 3px 2px rgba(0, 0, 0, 0.5));
`;
const Arrow = ({ x1, y1, x2, y2 }) => {
  const len = Math.hypot(x2 - x1, y2 - y1);
  const deg = (Math.atan2(y2 - y1, x2 - x1) * 180) / Math.PI;
  return (
    <g transform={`translate(${x1} ${y1}) rotate(${deg})`} fill="#fb0000" stroke="#8f1a1a" strokeWidth=".5">
      <path d={`M0-1.500H${len - 21}L${len - 26}-7 ${len} 0 ${len - 26} 7 ${len - 21} 1.500H0z`} />
    </g>
  );
};
const Pointer = styled.svg`
  position: absolute;
  left: 740px;
  top: 613px;
  z-index: 5;
`;
const Watermark = styled.div`
  position: absolute;
  right: 10px;
  bottom: 3px;
  z-index: 6;
  display: flex;
  align-items: center;
  opacity: 0.85;
  pointer-events: none;
`;
const MarkText = styled.div`
  display: flex;
  flex-direction: column;
  font: 700 21px/24px "Noto Sans CJK SC", sans-serif;
  color: #4e93d6;
  small { font: 400 17px/24px "Liberation Sans", sans-serif; color: #4fbd6e; }
`;

export default function App() {
  return (
    <Shell>
      <Global />
      <TitleArea />
      <Menu />
      <Ribbon />
      <Body>
        <Work>
          <FormulaBar>
            <NameBox><input aria-label="名称框" defaultValue="A1" /><Caret /></NameBox>
            <IconButton aria-label="浏览"><Icon n="zoomOut" c="#5b6579" w="1.2" /></IconButton>
            <Fx>fx</Fx>
            <FormulaInput aria-label="编辑栏" defaultValue="5.4" />
          </FormulaBar>
          <SheetRow>
            <Sheet />
            <VScroll>
              <SplitGrip />
              <Track><Caret $dir="up" /><VThumb /><Caret /></Track>
            </VScroll>
          </SheetRow>
          <TabBar>
            <TabNav>
              {["firstN", "prevN", "nextN", "lastN"].map((n) => (
                <IconButton key={n} $h={16} aria-label={n}><Icon n={n} c="#a4a9b4" /></IconButton>
              ))}
            </TabNav>
            {sheetTabs.map(([t, bg]) => <SheetTab key={t} $bg={bg} $active={t === "Sheet5"}>{t}</SheetTab>)}
            <IconButton $w={25} $h={21} aria-label="新建工作表"><Icon n="plus" c="#3c4661" w="1.2" /></IconButton>
            <HScroll>
              <Grip />
              <HTrack><SideArrow /><HThumb /><Spacer /><SideArrow $right /></HTrack>
              <Grip />
              <Blank />
            </HScroll>
          </TabBar>
        </Work>
        <Side>
          <Handle />
          {["rocket", "pointer", "sliders", "layout", "store", "bulb", "book"].map((n) => (
            <IconButton key={n} $w={24} aria-label={n}>
              <Icon n={n} w="1.2" c={n === "sliders" || n === "layout" ? "#9aa2b3" : undefined} />
            </IconButton>
          ))}
          <SideFoot><Icon n="dots3" /></SideFoot>
        </Side>
      </Body>
      <Status>
        <StatusInner>
          <IconButton $w={18} aria-label="宏"><Icon n="js" /></IconButton>
          <Rule $h={16} />
          <Tight $gap={2}><Icon n="payroll" />工资结算</Tight>
          <Caret $dir="up" />
          <Stats>
            <span>平均值=8.407142857143</span>
            <span>计数=21</span>
            <span>求和=117.7</span>
          </Stats>
          <Spacer />
          <Tools>
            <Tight aria-label="护眼"><Icon n="eye" /></Tight>
            <Tight aria-label="阅读"><Icon n="cross" w="1.2" /><Caret /></Tight>
          </Tools>
          <Rule $h={16} />
          <Views>
            <IconButton $w={24} $on aria-label="普通"><Icon n="grid" w="1.2" /></IconButton>
            <IconButton $w={24} aria-label="页面"><Icon n="pageView" w="1.2" /></IconButton>
            <IconButton $w={24} aria-label="分页"><Icon n="pageBreak" w="1.2" /></IconButton>
          </Views>
          <Rule $h={16} />
          <Tight>90%<Caret /></Tight>
          <IconButton $w={12} aria-label="缩小"><Icon n="min" w="2" /></IconButton>
          <Zoom type="range" aria-label="显示比例" min="0" max="100" defaultValue="44" />
          <IconButton $w={10} aria-label="放大"><Icon n="plus" w="2" size={14} /></IconButton>
          <IconButton aria-label="全屏"><Icon n="full" w="1.2" /></IconButton>
        </StatusInner>
      </Status>

      <MiniToolbar />
      <ContextMenu />
      <Overlay>
        <Arrow x1={388} y1={147} x2={288} y2={68} />
        <Arrow x1={1345} y1={208} x2={1378} y2={135} />
        <Arrow x1={41} y1={308} x2={20} y2={211} />
        <Arrow x1={580} y1={555} x2={654} y2={603} />
      </Overlay>
      <Pointer width="14" height="20" viewBox="0 0 14 20">
        <path d="M1.500 1.500v16l4-3.500 3 5 2-1-2.500-5h5z" fill="#fff" stroke="#222" />
      </Pointer>
      <Watermark>
        <svg width="44" height="42" viewBox="0 0 44 42">
          <path d="M42 2C22 0 0 12 1 24c1 9 14 9 22 3-8 2-16 1-16-5C7 13 26 4 42 2z" fill="#3f8fd8" />
          <path d="M22 16c-8 0-12 5-10 8s9 1 11-3c-3 1-7 1-6-1s3-3 5-4z" fill="#2f74c4" />
          <path d="M22 12c12-4 20 1 18 10-2 10-20 18-35 18 14-4 25-11 26-18 1-6-4-9-9-10z" fill="#63c36a" />
          <path d="M5 40c8-1 16-3 22-8-6 1-14 5-22 8z" fill="#e6dc4a" />
        </svg>
        <MarkText>极光下载站<small>www.xz7.com</small></MarkText>
      </Watermark>
    </Shell>
  );
}
